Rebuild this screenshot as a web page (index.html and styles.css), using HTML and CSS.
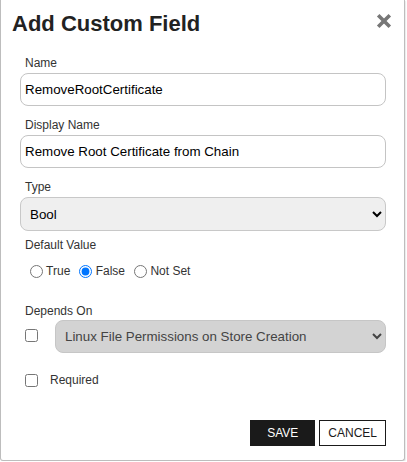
FILE: index.html
```html
<!DOCTYPE html>
<html lang="en">
<head>
<meta charset="utf-8">
<title>Add Custom Field</title>
<link rel="stylesheet" href="styles.css">
</head>
<body>
<div class="dialog">
  <div class="dialog-header">
    <h1 class="dialog-title">Add Custom Field</h1>
    <button class="close-btn" type="button" aria-label="Close">
      <svg width="16" height="16" viewBox="0 0 16 16"><path d="M2.2 2.2 L13.8 13.8 M13.8 2.2 L2.2 13.8" stroke="#777" stroke-width="3.6" stroke-linecap="butt" fill="none"/></svg>
    </button>
  </div>
  <div class="dialog-body">
    <div class="field">
      <label class="field-label">Name</label>
      <input class="text-input" type="text" value="RemoveRootCertificate">
    </div>
    <div class="field">
      <label class="field-label">Display Name</label>
      <input class="text-input" type="text" value="Remove Root Certificate from Chain">
    </div>
    <div class="field field-tight">
      <label class="field-label">Type</label>
      <select class="select-input">
        <option>Bool</option>
      </select>
    </div>
    <div class="field">
      <label class="field-label">Default Value</label>
      <div class="radio-row">
        <label class="radio-item"><input type="radio" name="dv"> True</label>
        <label class="radio-item"><input type="radio" name="dv" checked> False</label>
        <label class="radio-item"><input type="radio" name="dv"> Not Set</label>
      </div>
    </div>
    <div class="field depends">
      <label class="field-label">Depends On</label>
      <div class="depends-row">
        <input class="check" type="checkbox">
        <select class="select-input select-muted">
          <option>Linux File Permissions on Store Creation</option>
        </select>
      </div>
    </div>
    <label class="required-row"><input class="check" type="checkbox"> <span>Required</span></label>
    <div class="actions">
      <button class="btn btn-primary" type="button">SAVE</button>
      <button class="btn btn-outline" type="button">CANCEL</button>
    </div>
  </div>
</div>
</body>
</html>
```

FILE: styles.css
```css
html, body {
  margin: 0;
  padding: 0;
  background: #ffffff;
}

body {
  font-family: "Liberation Sans", Arial, sans-serif;
  color: #333;
}

.dialog {
  width: 405px;
  box-sizing: border-box;
  background: #fff;
  border: 1px solid #bdbdbd;
  border-top: none;
  border-radius: 0 0 3px 3px;
  box-shadow: 1px 1px 1px rgba(0, 0, 0, 0.08);
}

.dialog-header {
  display: flex;
  justify-content: space-between;
  align-items: flex-start;
  padding: 11px 12px 0 11px;
}

.dialog-title {
  margin: 0;
  font-size: 22px;
  line-height: 26px;
  font-weight: bold;
  color: #222;
}

.close-btn {
  margin-top: 2px;
  padding: 0;
  border: none;
  background: none;
  width: 16px;
  height: 16px;
  display: block;
}

.close-btn svg {
  display: block;
}

.dialog-body {
  padding: 19px 18px 14px 19px;
  display: flex;
  flex-direction: column;
}

.field {
  display: flex;
  flex-direction: column;
  margin-bottom: 12px;
}

.field-tight {
  margin-bottom: 7px;
}

.field-label {
  display: block;
  font-size: 12px;
  line-height: 14px;
  padding-left: 5px;
  margin-bottom: 3px;
  color: #333;
}

.text-input {
  box-sizing: border-box;
  height: 33px;
  width: 100%;
  margin: 0;
  border: 1px solid #c4c4c4;
  border-radius: 8px;
  padding: 0 4px;
  font-family: "Liberation Sans", Arial, sans-serif;
  font-size: 13.333px;
  color: #000;
  background: #fff;
  outline: none;
}

.select-input {
  box-sizing: border-box;
  height: 34px;
  width: 100%;
  margin: 0;
  border: 1px solid #c8c8c8;
  border-radius: 8px;
  padding: 0 4px 0 5px;
  font-family: "Liberation Sans", Arial, sans-serif;
  font-size: 13.333px;
  color: #000;
  background-color: #efefef;
}

.select-muted {
  height: 33px;
  background-color: #d3d3d3;
  color: #444;
  border-color: #c6c6c6;
}

.radio-row {
  display: flex;
  align-items: center;
  gap: 9px;
  margin-top: 9px;
  padding-left: 10px;
  height: 14px;
}

.radio-item {
  display: flex;
  align-items: center;
  font-size: 12px;
  line-height: 14px;
  color: #333;
  white-space: pre;
}

.radio-item input {
  margin: 0 0 0 0;
  width: 13px;
  height: 13px;
}

.depends {
  margin-top: 14px;
  margin-bottom: 0;
}

.depends .field-label {
  margin-bottom: 2px;
}

.depends-row {
  display: flex;
  align-items: flex-start;
}

.check {
  width: 13px;
  height: 13px;
  margin: 0 0 0 5px;
  flex: none;
}

.depends-row .check {
  margin-top: 9px;
  margin-right: 17px;
}

.required-row {
  display: flex;
  align-items: center;
  margin-top: 20px;
  height: 14px;
  font-size: 12px;
  line-height: 14px;
  color: #333;
}

.required-row .check {
  margin-right: 12px;
}

.actions {
  display: flex;
  justify-content: flex-end;
  gap: 4px;
  margin-top: 33px;
}

.btn {
  box-sizing: border-box;
  height: 26px;
  min-width: 65px;
  padding: 0 8px;
  margin: 0;
  font-family: "Liberation Sans", Arial, sans-serif;
  font-size: 12px;
  border-radius: 0;
  cursor: pointer;
}

.btn-primary {
  background: #1a1a1a;
  color: #fff;
  border: 1px solid #1a1a1a;
}

.btn-outline {
  background: #fff;
  color: #1a1a1a;
  border: 1px solid #1a1a1a;
}
```
